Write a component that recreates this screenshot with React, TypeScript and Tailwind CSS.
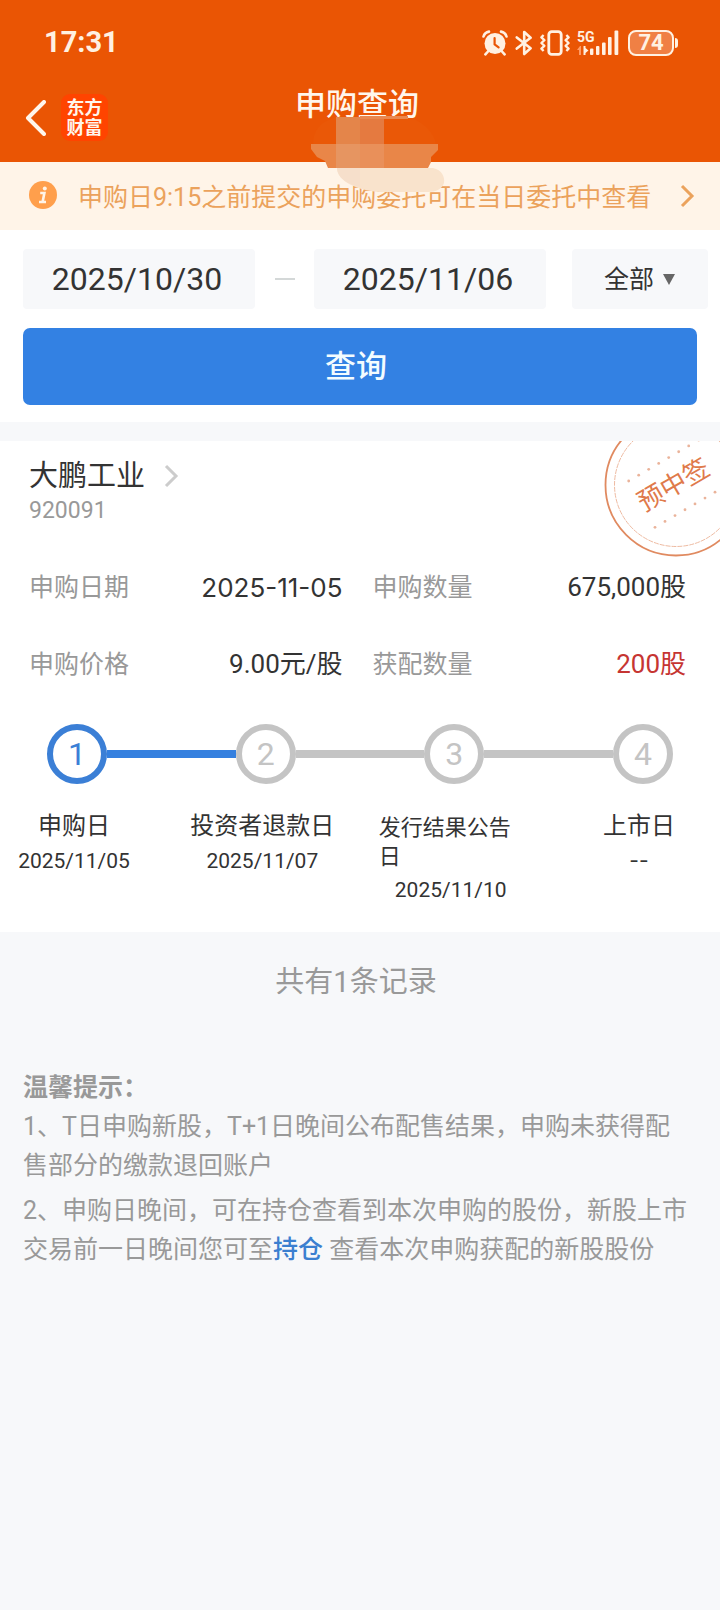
import React from "react";

const steps = [
  { name: "申购日", date: "2025/11/05", active: true, small: false },
  { name: "投资者退款日", date: "2025/11/07", active: false, small: false },
  { name: "发行结果公告日", date: "2025/11/10", active: false, small: true },
  { name: "上市日", date: "--", active: false, small: false },
];

const fields = [
  { label: "申购日期", value: "2025-11-05", style: "font-[Inter,sans-serif]" },
  { label: "申购数量", value: "675,000股", style: "" },
  { label: "申购价格", value: "9.00元/股", style: "" },
  { label: "获配数量", value: "200股", style: "text-[#c63532]" },
];

function StatusIcons() {
  return (
    <div className="flex items-center text-[#fff1e2]">
      <svg width="26" height="26" viewBox="0 0 26 26" fill="none" aria-hidden="true">
        <circle cx="13" cy="13.5" r="10.5" fill="currentColor" />
        <path d="M1.5 6.5A7 7 0 0 1 7 1.6M24.5 6.5A7 7 0 0 0 19 1.6" stroke="currentColor" strokeWidth="2.6" strokeLinecap="round" />
        <path d="M6 21.5 3.4 24.4M20 21.5l2.6 2.9" stroke="currentColor" strokeWidth="2.6" strokeLinecap="round" />
        <path d="M12.6 8v6.4l4 3" stroke="#ea5504" strokeWidth="2.2" strokeLinecap="round" strokeLinejoin="round" />
      </svg>
      <svg className="ml-[7px]" width="18" height="26" viewBox="0 0 18 26" fill="none" stroke="currentColor" strokeWidth="2.6" strokeLinejoin="round" strokeLinecap="round" aria-hidden="true">
        <path d="M1.8 7.4 15.6 18.2 9.2 24V2l6.4 5.8L1.8 18.6" />
      </svg>
      <svg className="ml-[7px]" width="30" height="26" viewBox="0 0 30 26" fill="none" stroke="currentColor" aria-hidden="true">
        <rect x="8.8" y="1.6" width="12.4" height="22.8" rx="3" strokeWidth="2.8" />
        <path d="M3.6 5 1.4 7.4 4.4 10.2 1.4 13 4.4 15.8 1.4 18.6 3.6 21M26.4 5l2.2 2.4-3 2.8 3 2.8-3 2.8 3 2.8L26.4 21" strokeWidth="2.3" strokeLinejoin="round" />
      </svg>
      <svg className="ml-[7px] overflow-visible" width="44" height="26" viewBox="0 0 44 26" fill="currentColor" aria-hidden="true">
        <text x="0" y="12" fontSize="14" fontWeight="700" fontFamily="Roboto, sans-serif">5G</text>
        <path d="M4 16v9H2v-5H0l3-4Z" fill="#ff9b66" />
        <path d="M6.500 16v9h2v-2l3-2.500-3-2.500V16Z" />
        <rect x="13" y="18.500" width="3.400" height="6.500" rx="1" />
        <rect x="19" y="16" width="3.400" height="9" rx="1" />
        <rect x="25" y="12.500" width="3.600" height="12.500" rx="1" />
        <rect x="31" y="7" width="3.600" height="18" rx="1" />
        <rect x="37.500" y="0.500" width="3.800" height="24.500" rx="1" />
      </svg>
      <div className="ml-[7px] flex h-[26px] w-[46px] items-center justify-center rounded-[8px] border-2 border-current bg-[#f08044] text-[22px] leading-[22px] font-bold">
        74
      </div>
      <div className="ml-px h-[10px] w-[3px] rounded-r-sm bg-current" />
    </div>
  );
}

function Smudge() {
  return (
    <svg className="pointer-events-none absolute top-[115px] left-1/2 -ml-[50px]" width="136" height="78" viewBox="0 0 136 78" aria-hidden="true">
      <path d="M27 2C12 6 3 14 3 29h123c-2-10-10-20-24-26Z" fill="#ea5807" />
      <rect x="26" y="2" width="24" height="27" fill="#e4854a" />
      <rect x="50" y="2" width="24" height="27" fill="#e57a40" />
      <rect x="50" y="1" width="48" height="3" fill="#e9874f" />
      <path d="M1 29h127v6l-7 7v5l-3 6H18l-3-7-8-4-6-8Z" fill="#e98648" />
      <rect x="26" y="29" width="24" height="24" fill="#e69561" />
      <rect x="50" y="29" width="24" height="24" fill="#e9905a" />
      <path d="M27 53h96c9 2 12 9 11 15-2 6-8 9-16 9H74c-20 0-46-8-47-24Z" fill="#f9e3cc" />
      <path d="M27 53h23v19c-14-3-23-10-23-19Z" fill="#f6dfcb" />
    </svg>
  );
}

function Stamp() {
  const dots = [0, 1, 2, 3, 4, 5, 6, 7, 8];
  return (
    <svg className="absolute top-0 right-0" width="116" height="118" viewBox="604 441 116 118" fill="none" aria-label="预中签" role="img">
      <circle cx="676" cy="485" r="70.500" stroke="#e08a60" strokeWidth="1.800" />
      <circle cx="676" cy="485" r="61.500" stroke="#eebba2" strokeWidth="1" strokeDasharray="5 1" />
      {dots.map((i) => (
        <g key={i} fill="#eab39a">
          <circle cx={628.7 + i * 10} cy={481 - i * 5.85} r="1.400" />
          <circle cx={655 + i * 10} cy={527.3 - i * 5.85} r="1.400" />
        </g>
      ))}
      <text x="673.500" y="494" transform="rotate(-30 673.5 485)" textAnchor="middle" fontSize="26" fill="#df7a4b" fontFamily="'Noto Sans CJK SC', sans-serif">
        预中签
      </text>
    </svg>
  );
}

export default function App() {
  return (
    <div className="relative min-h-screen bg-[#f7f8fa] font-[Roboto,'Noto_Sans_CJK_SC',sans-serif] text-[#333333]">
      <header className="bg-[#ea5504] text-[#fff6ec]">
        <div className="flex h-[86px] items-center justify-between pr-[42px] pl-[44px]">
          <span className="text-[29px] font-bold text-[#fff1e2]">17:31</span>
          <StatusIcons />
        </div>
        <div className="grid h-[76px] grid-cols-[1fr_auto_1fr] items-start pr-[31px] pl-[25px]">
          <div className="flex items-center gap-[15px] pt-2">
            <button type="button" aria-label="返回">
              <svg width="21" height="36" viewBox="0 0 21 36" fill="none" stroke="currentColor" strokeWidth="4" strokeLinecap="round" strokeLinejoin="round">
                <path d="M19 2 3 18l16 16" />
              </svg>
            </button>
            <div className="flex h-[47px] w-[47px] flex-col items-center justify-center rounded-[9px] bg-[#ff4400] text-[18px] leading-5 font-bold">
              <span>东方</span>
              <span>财富</span>
            </div>
          </div>
          <h1 className="text-[31px] leading-[38px] font-medium">申购查询</h1>
        </div>
      </header>

      <a href="#orders" className="flex h-[68px] items-center bg-[#fff4e8] pr-[25px] pl-[28px] text-[#eba25c]">
        <svg className="shrink-0" width="30" height="30" viewBox="0 0 30 30" aria-hidden="true">
          <circle cx="15" cy="14" r="14" fill="#ff9f4c" />
          <circle cx="16.800" cy="7.600" r="2" fill="#fff4e8" />
          <path d="M12.200 12h4.200l-1.800 9M11 21h7" fill="none" stroke="#fff4e8" strokeWidth="2.600" />
        </svg>
        <span className="ml-5 flex-1 pt-[3px] text-[25px] whitespace-nowrap">申购日9:15之前提交的申购委托可在当日委托中查看</span>
        <svg className="shrink-0" width="15" height="24" viewBox="0 0 15 24" fill="none" stroke="currentColor" strokeWidth="3" aria-hidden="true">
          <path d="M2 2l10 10L2 22" />
        </svg>
      </a>

      <Smudge />

      <form className="bg-white pt-[19px] pb-[17px]" onSubmit={(e) => e.preventDefault()}>
        <div className="flex items-center pr-3 pl-[23px]">
          <input aria-label="开始日期" defaultValue="2025/10/30" className="h-[60px] min-w-0 flex-1 rounded-[4px] bg-[#f7f8fa] pr-1 text-center text-[32px]" />
          <div className="flex w-[59px] shrink-0 justify-center">
            <div className="h-[2px] w-5 bg-[#d4d8d8]" />
          </div>
          <input aria-label="结束日期" defaultValue="2025/11/06" className="h-[60px] min-w-0 flex-1 rounded-[4px] bg-[#f7f8fa] pr-1 text-center text-[32px]" />
          <div className="relative ml-[26px] w-[136px] shrink-0">
            <select aria-label="类型" className="h-[60px] w-full appearance-none rounded-[4px] bg-[#f7f8fa] pt-[2px] pl-8 text-[25px]">
              <option>全部</option>
            </select>
            <svg className="pointer-events-none absolute top-[25px] right-[33px]" width="12" height="11" viewBox="0 0 12 11" fill="#666666" aria-hidden="true">
              <path d="M0 0h12L6 11Z" />
            </svg>
          </div>
        </div>
        <div className="mt-[19px] px-[23px]">
          <button type="submit" className="h-[77px] w-full rounded-[7px] bg-[#3381e3] pt-[2px] pr-2 text-[31px] font-medium text-[#f3fcff]">
            查询
          </button>
        </div>
      </form>

      <section className="relative mt-[19px] overflow-hidden bg-white pt-[15px] pb-[26px]">
        <Stamp />
        <div className="pl-[29px]">
          <button type="button" className="flex items-center gap-[19px] text-[29px] leading-[40px]">
            大鹏工业
            <svg width="15" height="24" viewBox="0 0 15 24" fill="none" stroke="#cccccc" strokeWidth="3" aria-hidden="true">
              <path d="M2 2l10 10L2 22" />
            </svg>
          </button>
          <p className="mt-[3px] text-[23px] leading-6 text-[#999999]">920091</p>
        </div>

        <dl className="mt-[26px] grid grid-cols-2 gap-x-[30px] pr-[34px] pl-[29px]">
          {fields.map((f) => (
            <div key={f.label} className="flex h-[77px] items-center justify-between">
              <dt className="text-[25px] text-[#999999]">{f.label}</dt>
              <dd className={`text-[26px] ${f.style}`}>{f.value}</dd>
            </div>
          ))}
        </dl>

        <div className="mt-[21px] flex items-center px-[47px]">
          {steps.map((s, i) => (
            <React.Fragment key={s.name}>
              {i > 0 && <div className={i === 1 ? "h-2 flex-1 bg-[#3580df]" : "h-2 flex-1 bg-[#c4c4c4]"} />}
              <div
                className={
                  s.active
                    ? "flex h-[60px] w-[60px] items-center justify-center rounded-full border-[6px] border-[#3b7fd6] text-[32px] text-[#3b7fd6]"
                    : "flex h-[60px] w-[60px] items-center justify-center rounded-full border-[6px] border-[#c4c4c4] text-[32px] text-[#c4c4c4]"
                }
              >
                {i + 1}
              </div>
            </React.Fragment>
          ))}
        </div>

        <ol className="mt-[26px] flex justify-between pr-[9px] pl-[2px]">
          {steps.map((s) => (
            <li key={s.name} className="w-36">
              <div className={s.small ? "pt-[3px] text-[22px] leading-[29px]" : "text-center text-[24px] leading-8 whitespace-nowrap"}>{s.name}</div>
              <div className={s.date === "--" ? "mt-[3px] text-center font-[Inter,sans-serif] text-[21px] leading-8" : "mt-[3px] text-center text-[21px] leading-8"}>{s.date}</div>
            </li>
          ))}
        </ol>
      </section>

      <p className="mt-[30px] pr-2 text-center text-[29px] leading-[40px] text-[#999999]">共有1条记录</p>

      <section className="mt-[66px] pr-7 pb-10 pl-[23px] text-[25px] leading-[39px] text-[#999999]">
        <h2 className="font-bold">温馨提示：</h2>
        <p>1、T日申购新股，T+1日晚间公布配售结果，申购未获得配售部分的缴款退回账户</p>
        <p className="mt-[6px]">
          2、申购日晚间，可在持仓查看到本次申购的股份，新股上市交易前一日晚间您可至
          <a href="#positions" className="font-medium text-[#3b7fd0]">持仓</a> 查看本次申购获配的新股股份
        </p>
      </section>
    </div>
  );
}
